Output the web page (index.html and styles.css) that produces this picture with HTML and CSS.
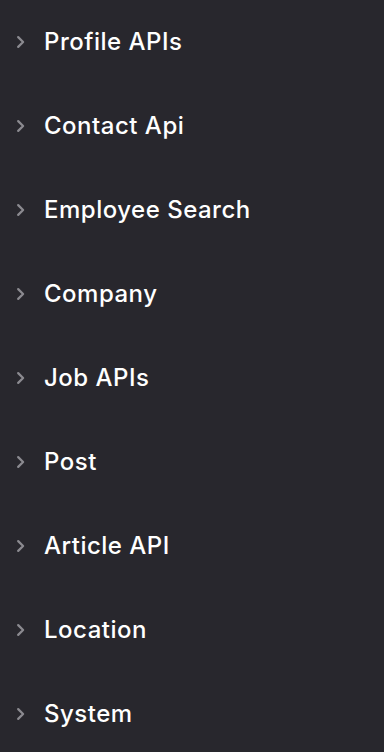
FILE: index.html
```html
<!DOCTYPE html>
<html lang="en">
<head>
  <meta charset="UTF-8" />
  <meta name="viewport" content="width=device-width, initial-scale=1.0"/>
  <title>API Reference</title>
  <link rel="stylesheet" href="styles.css">
</head>
<body>
  <nav class="sidebar">
    <div class="group"><svg class="chev" viewBox="0 0 10 10"><path d="M3 1.5 L6.5 5 L3 8.5"/></svg><span>Profile APIs</span></div>
    <div class="group"><svg class="chev" viewBox="0 0 10 10"><path d="M3 1.5 L6.5 5 L3 8.5"/></svg><span>Contact Api</span></div>
    <div class="group"><svg class="chev" viewBox="0 0 10 10"><path d="M3 1.5 L6.5 5 L3 8.5"/></svg><span>Employee Search</span></div>
    <div class="group"><svg class="chev" viewBox="0 0 10 10"><path d="M3 1.5 L6.5 5 L3 8.5"/></svg><span>Company</span></div>
    <div class="group"><svg class="chev" viewBox="0 0 10 10"><path d="M3 1.5 L6.5 5 L3 8.5"/></svg><span>Job APIs</span></div>
    <div class="group"><svg class="chev" viewBox="0 0 10 10"><path d="M3 1.5 L6.5 5 L3 8.5"/></svg><span>Post</span></div>
    <div class="group"><svg class="chev" viewBox="0 0 10 10"><path d="M3 1.5 L6.5 5 L3 8.5"/></svg><span>Article API</span></div>
    <div class="group"><svg class="chev" viewBox="0 0 10 10"><path d="M3 1.5 L6.5 5 L3 8.5"/></svg><span>Location</span></div>
    <div class="group"><svg class="chev" viewBox="0 0 10 10"><path d="M3 1.5 L6.5 5 L3 8.5"/></svg><span>System</span></div>
  </nav>
</body>
</html>
```

FILE: styles.css
```css
body {
  margin: 0;
  font-family: Inter, 'Noto Sans', sans-serif;
  background: #28272d;
  color: #fff;
  height: 100vh;
  overflow: hidden;
}
.sidebar {
  display: flex;
  flex-direction: column;
}
.group {
  height: 84px;
  display: flex;
  align-items: center;
  padding-left: 14px;
  cursor: pointer;
}
.chev {
  width: 14px;
  height: 14px;
  margin-right: 16px;
  fill: none;
  stroke: #8b8a90;
  stroke-width: 1.6;
  stroke-linecap: round;
  stroke-linejoin: round;
}
.group span {
  font-size: 24px;
  font-weight: 500;
  letter-spacing: 0.5px;
  margin-top: -2px;
}
```
